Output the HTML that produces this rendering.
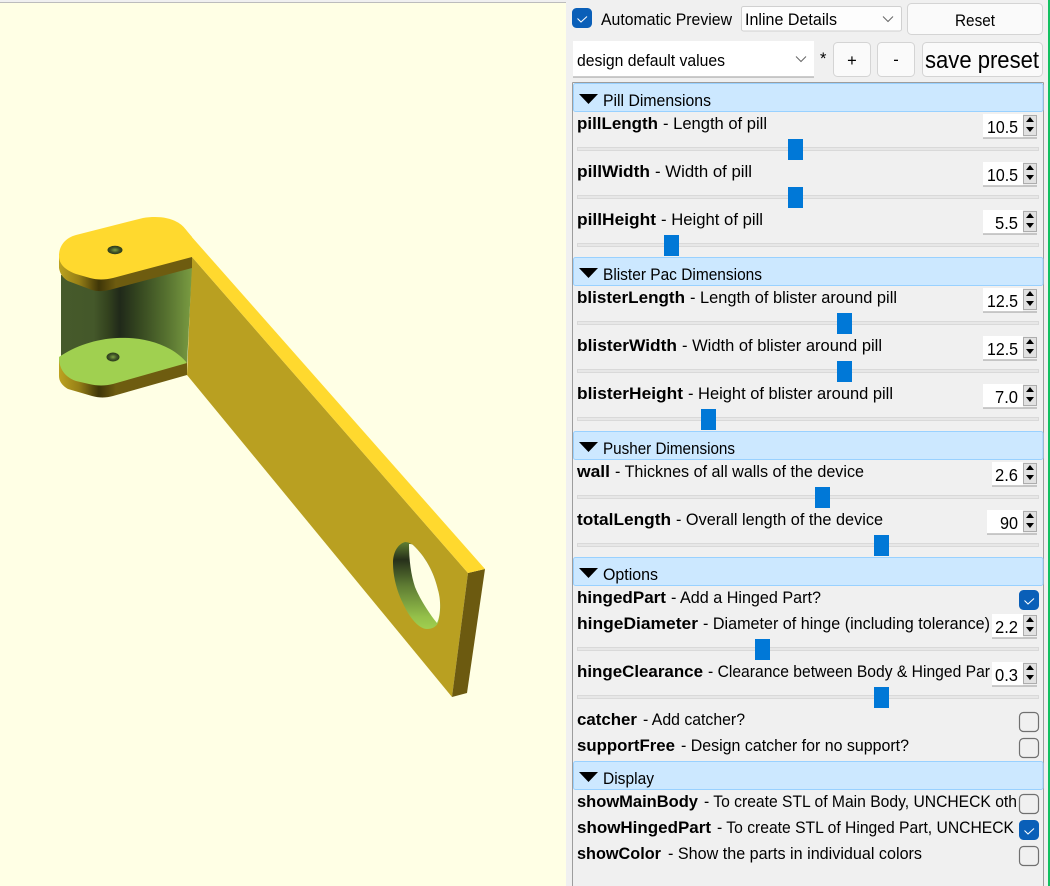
<!DOCTYPE html>
<html><head><meta charset="utf-8"><title>Customizer</title>
<style>
html,body{margin:0;padding:0;width:1050px;height:886px;overflow:hidden;background:#f0f0f0}
svg{display:block;position:absolute;left:0;top:0}
text{font-family:"Liberation Sans",sans-serif;font-size:16.5px;fill:#000}
.b{font-weight:bold}
.v{font-size:17.5px}
.h{fill:#cce8ff;stroke:#99d1ff;stroke-width:1}
.g{fill:#e7e7e7;stroke:#d9d9d9;stroke-width:1}
.t{fill:#0078d7}
.c{fill:#f0f0f0;stroke:#707070;stroke-width:1.2}
.k{fill:#0a5fb8;stroke:#0a5fb8;stroke-width:1}
.m{fill:none;stroke:#fff;stroke-width:1}
.s{fill:#fff}
.sb{fill:#e1e1e1;stroke:#adadad;stroke-width:1}
.ar{fill:#000}
.btn{fill:#fafafa;stroke:#d4d4d4;stroke-width:1}
.chev{fill:none;stroke:#666;stroke-width:1}
</style></head><body>
<svg width="1050" height="886" viewBox="0 0 1050 886" xmlns="http://www.w3.org/2000/svg">
<defs>
<linearGradient id="rim" gradientUnits="userSpaceOnUse" x1="59" y1="0" x2="116" y2="0">
<stop offset="0" stop-color="#bda320"/><stop offset=".35" stop-color="#967f16"/><stop offset=".7" stop-color="#3f3608"/><stop offset="1" stop-color="#6e5c10"/></linearGradient>
<linearGradient id="wall" gradientUnits="userSpaceOnUse" x1="61" y1="0" x2="192" y2="0">
<stop offset="0" stop-color="#465a2b"/><stop offset=".25" stop-color="#44582a"/><stop offset=".36" stop-color="#33421e"/><stop offset=".45" stop-color="#20291a"/><stop offset=".58" stop-color="#33441f"/><stop offset=".8" stop-color="#55702f"/><stop offset="1" stop-color="#7a9c42"/></linearGradient>
<linearGradient id="ring" gradientUnits="userSpaceOnUse" x1="0" y1="542" x2="0" y2="630">
<stop offset="0" stop-color="#5f7f32"/><stop offset=".2" stop-color="#26301a"/><stop offset=".5" stop-color="#5f7d33"/><stop offset=".85" stop-color="#94c04a"/><stop offset="1" stop-color="#a0d050"/></linearGradient>
<radialGradient id="hole"><stop offset="0" stop-color="#7d9f42"/><stop offset=".6" stop-color="#3f5327"/><stop offset="1" stop-color="#2c3a1c"/></radialGradient>
</defs>

<rect x="0" y="0" width="566" height="886" fill="#ffffe5"/>
<rect x="0" y="2" width="566" height="1" fill="#bcbcbc"/>
<rect x="0" y="0" width="566" height="2" fill="#f0f0f0"/>

<!-- model -->
<path d="M192 257L468 573L452 697L187 375Z" fill="#b9a021"/>
<path d="M468 573L485 569L467 693L452 697Z" fill="#6c5a10"/>
<path d="M183 227L485 569L468 573L192 257Z" fill="#ffd92e"/>
<path d="M61 275L192 266L187 364L61 356Z" fill="url(#wall)"/>
<path d="M59 360L59 376C59 382 63 386 68 389L92 396C99 398 106 398 113 396L187 375L187 362L113 378L59 358Z" fill="url(#rim)"/>
<path d="M59 357C75 346 96 339 117 338C137 337 155 341 170 349C177 353 183 358 187 363L113 384C105 386 97 386 89 384L76 381C65 377 59 369 59 357Z" fill="#a0d050"/>
<path d="M59 255L59 268C60 274 63 278 68 281L92 290C99 292 106 291 113 289L192 268L192 256L113 270L59 254Z" fill="url(#rim)"/>
<path d="M59 256C59 246 65 238 76 235L143 218C156 216 168 217 177 222C181 224 184 227 187 231L192 237L192 257L113 278C105 280 97 280 90 278L76 274C65 270 59 264 59 256Z" fill="#ffd92e"/>
<ellipse cx="115" cy="250" rx="7.500" ry="4.200" fill="url(#hole)"/>
<ellipse cx="113" cy="357" rx="6.500" ry="4.500" fill="url(#hole)"/>
<path d="M405 542C398 544 393 552 393 563C393 575 396 587 400 597C404 606 408 614 413 620C418 626 423 629 427 629C432 629 436 627 438 623C441 615 441 600 438 590C434 572 425 556 413 545C410 543 408 542 405 542Z" fill="url(#ring)"/>
<path d="M409 544C409 560 411 575 415 587C419 597 428 612 437 623C441 615 441 600 438 590C434 572 425 556 413 545C412 544 410 544 409 544Z" fill="#ffffe5"/>

<!-- panel -->
<rect x="566" y="0" width="484" height="886" fill="#f0f0f0"/>
<rect x="1048" y="0" width="2" height="886" fill="#12c060"/>
<path d="M572.500 82.500V886M1043.500 82.500V886M572.500 82.500H1043.500" fill="none" stroke="#9d9d9d" stroke-width="1"/>

<!-- top row -->
<rect x="572.500" y="8.500" width="19" height="19" rx="4" class="k"/><path d="M577.500 18.500L581 22L587 16.500" class="m"/>
<text x="601" y="25" textLength="131" lengthAdjust="spacingAndGlyphs">Automatic Preview</text>
<rect x="741.500" y="6.500" width="160" height="24.500" rx="2" fill="#fdfdfd" stroke="#d0d0d0"/>
<text x="745" y="25" textLength="92" lengthAdjust="spacingAndGlyphs">Inline Details</text>
<path d="M883 16.500l5 5l5-5" class="chev"/>
<rect x="907.500" y="3.500" width="135" height="31" rx="4" class="btn"/>
<text x="955" y="26" textLength="40" lengthAdjust="spacingAndGlyphs">Reset</text>

<rect x="573" y="41" width="241" height="36" fill="#fff"/><rect x="573" y="76.500" width="241" height="1" fill="#9a9a9a"/>
<text x="577" y="66" textLength="148" lengthAdjust="spacingAndGlyphs">design default values</text>
<path d="M796 56.500l5 5l5-5" class="chev"/>
<text x="820" y="64">*</text>
<rect x="833.500" y="42.500" width="37" height="34" rx="4" class="btn"/>
<text x="852" y="66" text-anchor="middle">+</text>
<rect x="877.500" y="42.500" width="37" height="34" rx="4" class="btn"/>
<text x="896" y="65" text-anchor="middle">-</text>
<rect x="922.500" y="42.500" width="120" height="34" rx="4" class="btn"/>
<text x="925" y="68" style="font-size:24px" textLength="114" lengthAdjust="spacingAndGlyphs">save preset</text>

<!-- headers -->
<rect x="573.500" y="83.500" width="469.500" height="28" rx="2" class="h"/><path d="M579 94h19l-9.500 10z"/><text x="603" y="106" textLength="108" lengthAdjust="spacingAndGlyphs">Pill Dimensions</text>
<rect x="573.500" y="257.500" width="469.500" height="28" rx="2" class="h"/><path d="M579 268h19l-9.500 10z"/><text x="603" y="280" textLength="159" lengthAdjust="spacingAndGlyphs">Blister Pac Dimensions</text>
<rect x="573.500" y="431.500" width="469.500" height="28" rx="2" class="h"/><path d="M579 442h19l-9.500 10z"/><text x="603" y="454" textLength="132" lengthAdjust="spacingAndGlyphs">Pusher Dimensions</text>
<rect x="573.500" y="557.500" width="469.500" height="28" rx="2" class="h"/><path d="M579 568h19l-9.500 10z"/><text x="603" y="580" textLength="55" lengthAdjust="spacingAndGlyphs">Options</text>
<rect x="573.500" y="761.500" width="469.500" height="28" rx="2" class="h"/><path d="M579 772h19l-9.500 10z"/><text x="603" y="784" textLength="51" lengthAdjust="spacingAndGlyphs">Display</text>

<!-- labels -->
<text class="b" x="577" y="129" textLength="81" lengthAdjust="spacingAndGlyphs">pillLength</text><text x="663" y="129" textLength="104" lengthAdjust="spacingAndGlyphs">- Length of pill</text>
<text class="b" x="577" y="177" textLength="73" lengthAdjust="spacingAndGlyphs">pillWidth</text><text x="655" y="177" textLength="97" lengthAdjust="spacingAndGlyphs">- Width of pill</text>
<text class="b" x="577" y="225" textLength="79" lengthAdjust="spacingAndGlyphs">pillHeight</text><text x="661" y="225" textLength="102" lengthAdjust="spacingAndGlyphs">- Height of pill</text>
<text class="b" x="577" y="303" textLength="108" lengthAdjust="spacingAndGlyphs">blisterLength</text><text x="690" y="303" textLength="207" lengthAdjust="spacingAndGlyphs">- Length of blister around pill</text>
<text class="b" x="577" y="351" textLength="100" lengthAdjust="spacingAndGlyphs">blisterWidth</text><text x="682" y="351" textLength="200" lengthAdjust="spacingAndGlyphs">- Width of blister around pill</text>
<text class="b" x="577" y="399" textLength="106" lengthAdjust="spacingAndGlyphs">blisterHeight</text><text x="688" y="399" textLength="205" lengthAdjust="spacingAndGlyphs">- Height of blister around pill</text>
<text class="b" x="577" y="477" textLength="33" lengthAdjust="spacingAndGlyphs">wall</text><text x="615" y="477" textLength="249" lengthAdjust="spacingAndGlyphs">- Thicknes of all walls of the device</text>
<text class="b" x="577" y="525" textLength="94" lengthAdjust="spacingAndGlyphs">totalLength</text><text x="676" y="525" textLength="207" lengthAdjust="spacingAndGlyphs">- Overall length of the device</text>
<text class="b" x="577" y="603" textLength="89" lengthAdjust="spacingAndGlyphs">hingedPart</text><text x="671" y="603" textLength="150" lengthAdjust="spacingAndGlyphs">- Add a Hinged Part?</text>
<text class="b" x="577" y="629" textLength="121" lengthAdjust="spacingAndGlyphs">hingeDiameter</text><text x="703" y="629" textLength="287" lengthAdjust="spacingAndGlyphs">- Diameter of hinge (including tolerance)</text>
<text class="b" x="577" y="677" textLength="126" lengthAdjust="spacingAndGlyphs">hingeClearance</text><text x="708" y="677" textLength="282" lengthAdjust="spacingAndGlyphs">- Clearance between Body &amp; Hinged Par</text>
<text class="b" x="577" y="725" textLength="60" lengthAdjust="spacingAndGlyphs">catcher</text><text x="643" y="725" textLength="102" lengthAdjust="spacingAndGlyphs">- Add catcher?</text>
<text class="b" x="577" y="751" textLength="98" lengthAdjust="spacingAndGlyphs">supportFree</text><text x="681" y="751" textLength="228" lengthAdjust="spacingAndGlyphs">- Design catcher for no support?</text>
<text class="b" x="577" y="807" textLength="121" lengthAdjust="spacingAndGlyphs">showMainBody</text><text x="704" y="807" textLength="313" lengthAdjust="spacingAndGlyphs">- To create STL of Main Body, UNCHECK oth</text>
<text class="b" x="577" y="833" textLength="134" lengthAdjust="spacingAndGlyphs">showHingedPart</text><text x="717" y="833" textLength="297" lengthAdjust="spacingAndGlyphs">- To create STL of Hinged Part, UNCHECK</text>
<text class="b" x="577" y="859" textLength="84" lengthAdjust="spacingAndGlyphs">showColor</text><text x="668" y="859" textLength="254" lengthAdjust="spacingAndGlyphs">- Show the parts in individual colors</text>

<!-- sliders -->
<rect x="577.500" y="147.500" width="461" height="3" class="g"/><rect x="788" y="139" width="15" height="21" class="t"/>
<rect x="577.500" y="195.500" width="461" height="3" class="g"/><rect x="788" y="187" width="15" height="21" class="t"/>
<rect x="577.500" y="243.500" width="461" height="3" class="g"/><rect x="664" y="235" width="15" height="21" class="t"/>
<rect x="577.500" y="321.500" width="461" height="3" class="g"/><rect x="837" y="313" width="15" height="21" class="t"/>
<rect x="577.500" y="369.500" width="461" height="3" class="g"/><rect x="837" y="361" width="15" height="21" class="t"/>
<rect x="577.500" y="417.500" width="461" height="3" class="g"/><rect x="701" y="409" width="15" height="21" class="t"/>
<rect x="577.500" y="495.500" width="461" height="3" class="g"/><rect x="815" y="487" width="15" height="21" class="t"/>
<rect x="577.500" y="543.500" width="461" height="3" class="g"/><rect x="874" y="535" width="15" height="21" class="t"/>
<rect x="577.500" y="647.500" width="461" height="3" class="g"/><rect x="755" y="639" width="15" height="21" class="t"/>
<rect x="577.500" y="695.500" width="461" height="3" class="g"/><rect x="874" y="687" width="15" height="21" class="t"/>

<!-- spin boxes -->
<rect x="983" y="114" width="40" height="24" class="s"/><rect x="983" y="137.500" width="54" height="1" fill="#9a9a9a"/><rect x="1023.500" y="115.500" width="13" height="20" class="sb"/><path d="M1026 122h8l-4-5zM1026 127h8l-4 5z" class="ar"/><text class="v" x="987" y="133" textLength="31" lengthAdjust="spacingAndGlyphs">10.5</text>
<rect x="983" y="162" width="40" height="24" class="s"/><rect x="983" y="185.500" width="54" height="1" fill="#9a9a9a"/><rect x="1023.500" y="163.500" width="13" height="20" class="sb"/><path d="M1026 170h8l-4-5zM1026 175h8l-4 5z" class="ar"/><text class="v" x="987" y="181" textLength="31" lengthAdjust="spacingAndGlyphs">10.5</text>
<rect x="983" y="210" width="40" height="24" class="s"/><rect x="983" y="233.500" width="54" height="1" fill="#9a9a9a"/><rect x="1023.500" y="211.500" width="13" height="20" class="sb"/><path d="M1026 218h8l-4-5zM1026 223h8l-4 5z" class="ar"/><text class="v" x="995" y="229" textLength="23" lengthAdjust="spacingAndGlyphs">5.5</text>
<rect x="983" y="288" width="40" height="24" class="s"/><rect x="983" y="311.500" width="54" height="1" fill="#9a9a9a"/><rect x="1023.500" y="289.500" width="13" height="20" class="sb"/><path d="M1026 296h8l-4-5zM1026 301h8l-4 5z" class="ar"/><text class="v" x="987" y="307" textLength="31" lengthAdjust="spacingAndGlyphs">12.5</text>
<rect x="983" y="336" width="40" height="24" class="s"/><rect x="983" y="359.500" width="54" height="1" fill="#9a9a9a"/><rect x="1023.500" y="337.500" width="13" height="20" class="sb"/><path d="M1026 344h8l-4-5zM1026 349h8l-4 5z" class="ar"/><text class="v" x="987" y="355" textLength="31" lengthAdjust="spacingAndGlyphs">12.5</text>
<rect x="983" y="384" width="40" height="24" class="s"/><rect x="983" y="407.500" width="54" height="1" fill="#9a9a9a"/><rect x="1023.500" y="385.500" width="13" height="20" class="sb"/><path d="M1026 392h8l-4-5zM1026 397h8l-4 5z" class="ar"/><text class="v" x="995" y="403" textLength="23" lengthAdjust="spacingAndGlyphs">7.0</text>
<rect x="992" y="462" width="31" height="24" class="s"/><rect x="992" y="485.500" width="45" height="1" fill="#9a9a9a"/><rect x="1023.500" y="463.500" width="13" height="20" class="sb"/><path d="M1026 470h8l-4-5zM1026 475h8l-4 5z" class="ar"/><text class="v" x="995" y="481" textLength="23" lengthAdjust="spacingAndGlyphs">2.6</text>
<rect x="987" y="510" width="36" height="24" class="s"/><rect x="987" y="533.500" width="50" height="1" fill="#9a9a9a"/><rect x="1023.500" y="511.500" width="13" height="20" class="sb"/><path d="M1026 518h8l-4-5zM1026 523h8l-4 5z" class="ar"/><text class="v" x="1000" y="529" textLength="18" lengthAdjust="spacingAndGlyphs">90</text>
<rect x="992" y="614" width="31" height="24" class="s"/><rect x="992" y="637.500" width="45" height="1" fill="#9a9a9a"/><rect x="1023.500" y="615.500" width="13" height="20" class="sb"/><path d="M1026 622h8l-4-5zM1026 627h8l-4 5z" class="ar"/><text class="v" x="995" y="633" textLength="23" lengthAdjust="spacingAndGlyphs">2.2</text>
<rect x="992" y="662" width="31" height="24" class="s"/><rect x="992" y="685.500" width="45" height="1" fill="#9a9a9a"/><rect x="1023.500" y="663.500" width="13" height="20" class="sb"/><path d="M1026 670h8l-4-5zM1026 675h8l-4 5z" class="ar"/><text class="v" x="995" y="681" textLength="23" lengthAdjust="spacingAndGlyphs">0.3</text>

<!-- checkboxes -->
<rect x="1019.500" y="590.500" width="19" height="19" rx="4" class="k"/><path d="M1024.500 600.500L1028 604L1034 598.500" class="m"/>
<rect x="1019.500" y="712.500" width="19" height="19" rx="4" class="c"/>
<rect x="1019.500" y="738.500" width="19" height="19" rx="4" class="c"/>
<rect x="1019.500" y="794.500" width="19" height="19" rx="4" class="c"/>
<rect x="1019.500" y="820.500" width="19" height="19" rx="4" class="k"/><path d="M1024.500 830.500L1028 834L1034 828.500" class="m"/>
<rect x="1019.500" y="846.500" width="19" height="19" rx="4" class="c"/>
</svg>
</body></html>
